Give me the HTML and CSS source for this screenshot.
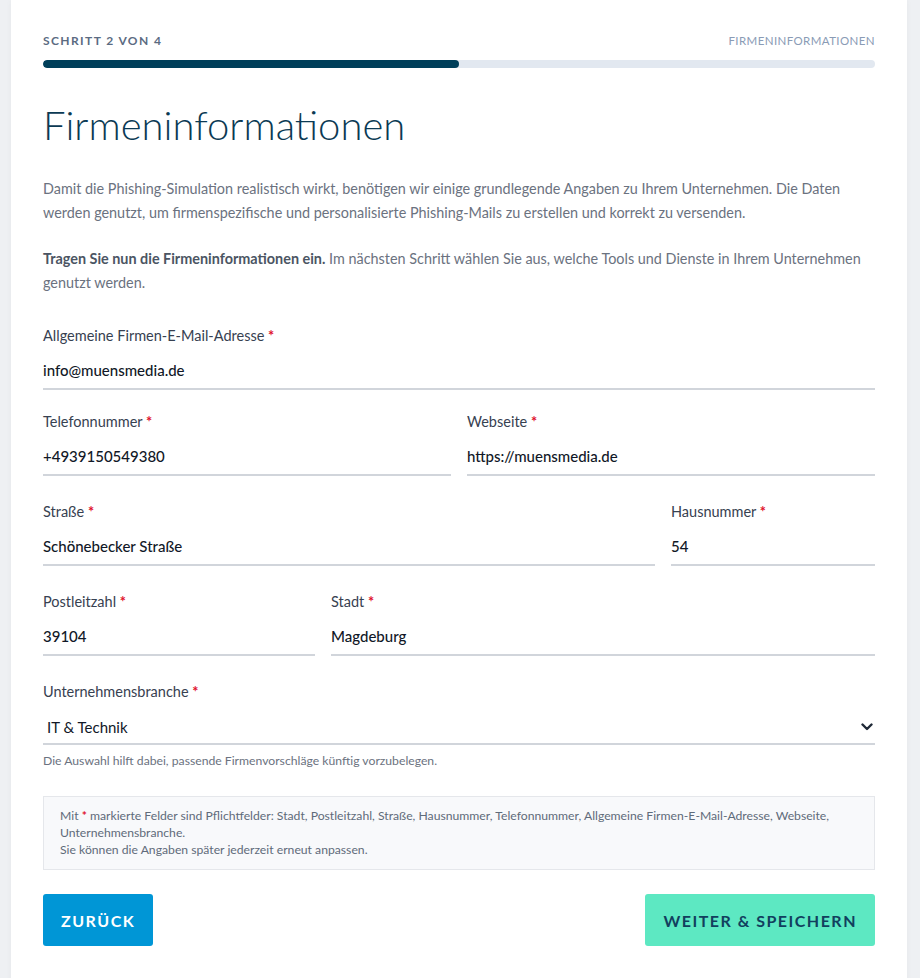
FILE: index.html
```html
<!DOCTYPE html>
<html lang="de">
<head>
<meta charset="utf-8">
<title>Firmeninformationen</title>
<link rel="stylesheet" href="styles.css">
</head>
<body>
<main class="card">
  <div class="steps">
    <span class="steps__count">Schritt 2 von 4</span>
    <span class="steps__name">Firmeninformationen</span>
  </div>
  <div class="progress"><div class="progress__fill" style="width:50%"></div></div>

  <h1 class="title">Firmeninformationen</h1>
  <p class="lead">Damit die Phishing-Simulation realistisch wirkt, benötigen wir einige grundlegende Angaben zu Ihrem Unternehmen. Die Daten werden genutzt, um firmenspezifische und personalisierte Phishing-Mails zu erstellen und korrekt zu versenden.</p>
  <p class="lead"><strong>Tragen Sie nun die Firmeninformationen ein.</strong> Im nächsten Schritt wählen Sie aus, welche Tools und Dienste in Ihrem Unternehmen genutzt werden.</p>

  <form class="form">
    <div class="row row--first">
      <label class="field">
        <span class="field__label">Allgemeine Firmen-E-Mail-Adresse <em>*</em></span>
        <input class="field__input" type="text" value="info@muensmedia.de">
      </label>
    </div>
    <div class="row row--half">
      <label class="field">
        <span class="field__label">Telefonnummer <em>*</em></span>
        <input class="field__input" type="text" value="+4939150549380">
      </label>
      <label class="field">
        <span class="field__label">Webseite <em>*</em></span>
        <input class="field__input" type="text" value="https://muensmedia.de">
      </label>
    </div>
    <div class="row row--street">
      <label class="field">
        <span class="field__label">Straße <em>*</em></span>
        <input class="field__input" type="text" value="Schönebecker Straße">
      </label>
      <label class="field">
        <span class="field__label">Hausnummer <em>*</em></span>
        <input class="field__input" type="text" value="54">
      </label>
    </div>
    <div class="row row--city">
      <label class="field">
        <span class="field__label">Postleitzahl <em>*</em></span>
        <input class="field__input" type="text" value="39104">
      </label>
      <label class="field">
        <span class="field__label">Stadt <em>*</em></span>
        <input class="field__input" type="text" value="Magdeburg">
      </label>
    </div>
    <div class="row row--last">
      <label class="field">
        <span class="field__label">Unternehmensbranche <em>*</em></span>
        <span class="select">
          <select class="field__input field__select">
            <option>IT &amp; Technik</option>
          </select>
          <svg class="select__chevron" width="12" height="8" viewBox="0 0 12 8"><path d="M1.5 1.5 L6 6 L10.5 1.5" fill="none" stroke="#1f2937" stroke-width="2.4" stroke-linecap="round" stroke-linejoin="round"/></svg>
        </span>
        <span class="field__help">Die Auswahl hilft dabei, passende Firmenvorschläge künftig vorzubelegen.</span>
      </label>
    </div>

    <div class="notice">
      <span>Mit <em>*</em> markierte Felder sind Pflichtfelder: Stadt, Postleitzahl, Straße, Hausnummer, Telefonnummer, Allgemeine Firmen-E-Mail-Adresse, Webseite, Unternehmensbranche.</span><br>
      <span>Sie können die Angaben später jederzeit erneut anpassen.</span>
    </div>

    <div class="actions">
      <button type="button" class="btn btn--back">Zurück</button>
      <button type="button" class="btn btn--next">Weiter &amp; Speichern</button>
    </div>
  </form>
</main>
</body>
</html>
```
FILE: styles.css
```css
* { box-sizing: border-box; }
html, body { margin: 0; padding: 0; }
body {
  background: #eef0f3;
  font-family: "Lato", "Open Sans", sans-serif;
  color: #374151;
  height: 978px;
  overflow: hidden;
}
.card {
  margin-left: 11px;
  width: 896px;
  min-height: 978px;
  background: #fff;
  padding: 32px 32px 40px 32px;
  box-shadow: 0 0 6px rgba(0,0,0,0.04);
}
.steps {
  display: flex;
  justify-content: space-between;
  align-items: center;
  height: 16px;
}
.steps__count {
  font-size: 12px;
  font-weight: 700;
  letter-spacing: 1.4px;
  text-transform: uppercase;
  color: #5b6b82;
}
.steps__name {
  font-size: 11.5px;
  font-weight: 400;
  letter-spacing: 0.4px;
  text-transform: uppercase;
  color: #8a9bb5;
}
.progress {
  margin-top: 12px;
  height: 8px;
  border-radius: 4px;
  background: #e2e8f0;
  overflow: hidden;
}
.progress__fill {
  height: 100%;
  background: #003f5a;
  border-radius: 4px;
}
.title {
  margin: 33px 0 28px;
  font-size: 40px;
  line-height: 48px;
  font-weight: 300;
  color: #0b3a54;
}
.lead {
  margin: 0 0 22px;
  font-size: 14.4px;
  line-height: 24px;
  color: #6b7280;
}
.lead strong { color: #4b5563; font-weight: 700; }
.form { margin-top: 32px; }
.row {
  display: grid;
  gap: 16px;
  margin-bottom: 27px;
}
.row--first { margin-bottom: 23px; }
.row--half { grid-template-columns: 1fr 1fr; }
.row--street { grid-template-columns: 3fr 1fr; }
.row--city { grid-template-columns: 1fr 2fr; }
.row--last { margin-bottom: 0; }
.field { display: flex; flex-direction: column; }
.field__label {
  font-size: 14.5px;
  line-height: 20px;
  color: #374151;
  margin-bottom: 6px;
  margin-top: -1px;
  padding-bottom: 1px;
}
em { font-style: normal; font-weight: 700; color: #e0112b; }
.field__input {
  height: 37px;
  border: 0;
  border-bottom: 2px solid #d1d5db;
  padding: 0 0 2px 0;
  font-family: inherit;
  font-size: 15px;
  font-weight: 500;
  color: #111827;
  background: transparent;
  outline: none;
  border-radius: 0;
}
.select { position: relative; display: block; }
.field__select {
  width: 100%;
  appearance: none;
  -webkit-appearance: none;
  padding: 2px 0 0 4px;
  height: 36px;
  font-weight: 400;
}
.select__chevron {
  position: absolute;
  right: 2px;
  top: 14px;
}
.field__help {
  margin-top: 8px;
  font-size: 12.2px;
  line-height: 16px;
  color: #6b7280;
}
.notice {
  margin-top: 27px;
  background: #f8f9fb;
  border: 1px solid #e5e7eb;
  padding: 10px 16px 11px;
  font-size: 12.2px;
  line-height: 17px;
  color: #5f6b7a;
}
.actions {
  display: flex;
  justify-content: space-between;
  margin-top: 24px;
}
.btn {
  height: 52px;
  border: 0;
  border-radius: 3px;
  font-family: inherit;
  font-size: 16px;
  font-weight: 700;
  letter-spacing: 1.5px;
  text-transform: uppercase;
  padding: 0 18px;
  white-space: nowrap;
  cursor: pointer;
}
.btn--back { background: #0096d6; color: #fff; }
.btn--next { background: #5de8c2; color: #123f5e; }
```
